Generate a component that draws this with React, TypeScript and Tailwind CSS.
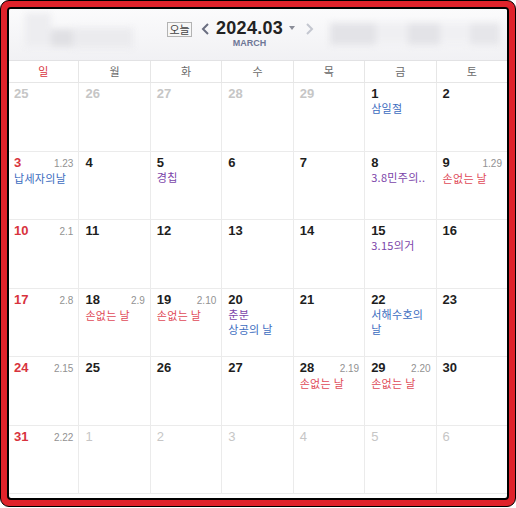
import React from 'react';

type Tone = 'blue' | 'purple' | 'red';

interface Ev {
  text: string;
  tone: Tone;
}

interface Day {
  n: number;
  other?: boolean;
  thin?: boolean;
  lunar?: string;
  events?: Ev[];
}

const toneClass: Record<Tone, string> = {
  blue: 'text-[#3c6cc0]',
  purple: 'text-[#7b45a9]',
  red: 'text-[#e04a58]',
};

const WEEK = ['일', '월', '화', '수', '목', '금', '토'];

const DAYS: Day[] = [
  { n: 25, other: true }, { n: 26, other: true }, { n: 27, other: true }, { n: 28, other: true }, { n: 29, other: true },
  { n: 1, events: [{ text: '삼일절', tone: 'blue' }] },
  { n: 2 },

  { n: 3, lunar: '1.23', events: [{ text: '납세자의날', tone: 'blue' }] },
  { n: 4 },
  { n: 5, events: [{ text: '경칩', tone: 'purple' }] },
  { n: 6 },
  { n: 7 },
  { n: 8, events: [{ text: '3.8민주의..', tone: 'purple' }] },
  { n: 9, lunar: '1.29', events: [{ text: '손없는 날', tone: 'red' }] },

  { n: 10, lunar: '2.1' },
  { n: 11 }, { n: 12 }, { n: 13 }, { n: 14 },
  { n: 15, events: [{ text: '3.15의거', tone: 'purple' }] },
  { n: 16 },

  { n: 17, lunar: '2.8' },
  { n: 18, lunar: '2.9', events: [{ text: '손없는 날', tone: 'red' }] },
  { n: 19, lunar: '2.10', events: [{ text: '손없는 날', tone: 'red' }] },
  { n: 20, events: [{ text: '춘분', tone: 'purple' }, { text: '상공의 날', tone: 'blue' }] },
  { n: 21 },
  { n: 22, events: [{ text: '서해수호의 날', tone: 'blue' }] },
  { n: 23 },

  { n: 24, lunar: '2.15' },
  { n: 25 }, { n: 26 }, { n: 27 },
  { n: 28, lunar: '2.19', events: [{ text: '손없는 날', tone: 'red' }] },
  { n: 29, lunar: '2.20', events: [{ text: '손없는 날', tone: 'red' }] },
  { n: 30 },

  { n: 31, lunar: '2.22' },
  { n: 1, other: true, thin: true }, { n: 2, other: true, thin: true }, { n: 3, other: true, thin: true },
  { n: 4, other: true, thin: true }, { n: 5, other: true, thin: true }, { n: 6, other: true, thin: true },
];

const num = "font-['Liberation_Sans','Noto_Sans_CJK_KR',sans-serif]";
const kr = "font-['Noto_Sans_CJK_KR','Liberation_Sans',sans-serif]";

function Cell({ d, col }: { d: Day; col: number }) {
  const numColor = d.other ? 'text-[#c6c6c6]' : col === 0 ? 'text-[#d8333d]' : 'text-[#1e1e1e]';
  return (
    <div className="border-l border-b border-[#ebebeb] pl-[6px] pr-[5px] pt-[3px] min-w-0">
      <div className="flex items-baseline justify-between">
        <span className={`${num} text-[13px] leading-[15px] ${d.thin ? 'font-normal' : 'font-bold'} ${numColor}`}>
          {d.n}
        </span>
        {d.lunar && (
          <span className={`${num} text-[10px] leading-[15px] text-[#929292]`}>{d.lunar}</span>
        )}
      </div>
      {d.events?.map((e, i) => (
        <p key={i} className={`${kr} text-[11px] leading-[15px] tracking-[0.3px] ${toneClass[e.tone]}`}>
          {e.text}
        </p>
      ))}
    </div>
  );
}

function Blur({ w, h, c, mt = 0 }: { w: number; h: number; c: string; mt?: number }) {
  return <div style={{ width: w, height: h, background: c, marginTop: mt }} />;
}

export default function App() {
  return (
    <div className="w-[516px] h-[508px] bg-white">
      <div className="h-[507px] rounded-[9px] border border-black bg-[#e0232b] p-[6px]">
        <div className="h-full rounded-[4px] border-2 border-black bg-white overflow-hidden flex flex-col">
          {/* header */}
          <div className="h-[52px] shrink-0 border-b border-[#e2e2e4] bg-gradient-to-b from-[#fbfbfc] to-[#f1f1f4] flex items-start">
            {/* blurred left tools */}
            <div className="ml-[16px] mt-[4px] w-[112px] h-[38px] flex items-start blur-[3px]">
              <Blur w={26} h={34} c="#ededf0" />
              <Blur w={22} h={18} c="#e0e0e4" mt={16} />
              <Blur w={60} h={20} c="#ebebee" mt={15} />
            </div>

            {/* center nav */}
            <div className="ml-[30px] flex items-start">
              <button className={`${kr} mt-[13px] w-[25px] h-[15px] border border-[#b3b3b3] bg-[#f7f7f7] text-[11px] leading-[13px] text-[#444] flex items-center justify-center`}>
                오늘
              </button>
              <svg className="ml-[9px] mt-[14px]" width="9" height="12" viewBox="0 0 9 12" fill="none">
                <path d="M7 1L2 6l5 5" stroke="#6a6e80" strokeWidth="2" />
              </svg>
              <div className="relative ml-[6px] pt-[9px] flex flex-col items-center">
                <span className={`${num} text-[18px] leading-[20px] font-bold text-[#222] tracking-[0.3px]`}>2024.03</span>
                <span className={`${num} text-[9px] leading-[10px] font-bold text-[#6e7796]`}>MARCH</span>
                <svg className="absolute -right-[12px] top-[17px]" width="6" height="4" viewBox="0 0 6 4">
                  <path d="M0 0h6L3 4z" fill="#8a8d98" />
                </svg>
              </div>
              <svg className="ml-[22px] mt-[14px]" width="9" height="12" viewBox="0 0 9 12" fill="none">
                <path d="M2 1l5 5-5 5" stroke="#c4c7d0" strokeWidth="2" />
              </svg>
            </div>

            {/* blurred right tools */}
            <div className="ml-[16px] mt-[14px] flex-1 h-[26px] flex items-start blur-[3px] pr-[6px]">
              <Blur w={46} h={22} c="#e3e3e7" />
              <Blur w={32} h={20} c="#efeff2" />
              <Blur w={32} h={22} c="#e3e3e7" />
              <Blur w={30} h={20} c="#f0f0f3" />
              <Blur w={30} h={22} c="#e6e6ea" />
            </div>
          </div>

          {/* calendar */}
          <div className="overflow-hidden">
            <div className="w-[500px] -ml-[2px]">
              <div className="grid grid-cols-7 h-[22px] border-b border-[#e6e6e6]">
                {WEEK.map((w, i) => (
                  <div
                    key={w}
                    className={`${kr} border-l border-[#e6e6e6] flex items-center justify-center text-[11px] ${i === 0 ? 'text-[#d8333d]' : 'text-[#6a6a6a]'}`}
                  >
                    {w}
                  </div>
                ))}
              </div>
              <div className="grid grid-cols-7 auto-rows-[68.5px]">
                {DAYS.map((d, i) => (
                  <Cell key={i} d={d} col={i % 7} />
                ))}
              </div>
            </div>
          </div>
        </div>
      </div>
    </div>
  );
}
